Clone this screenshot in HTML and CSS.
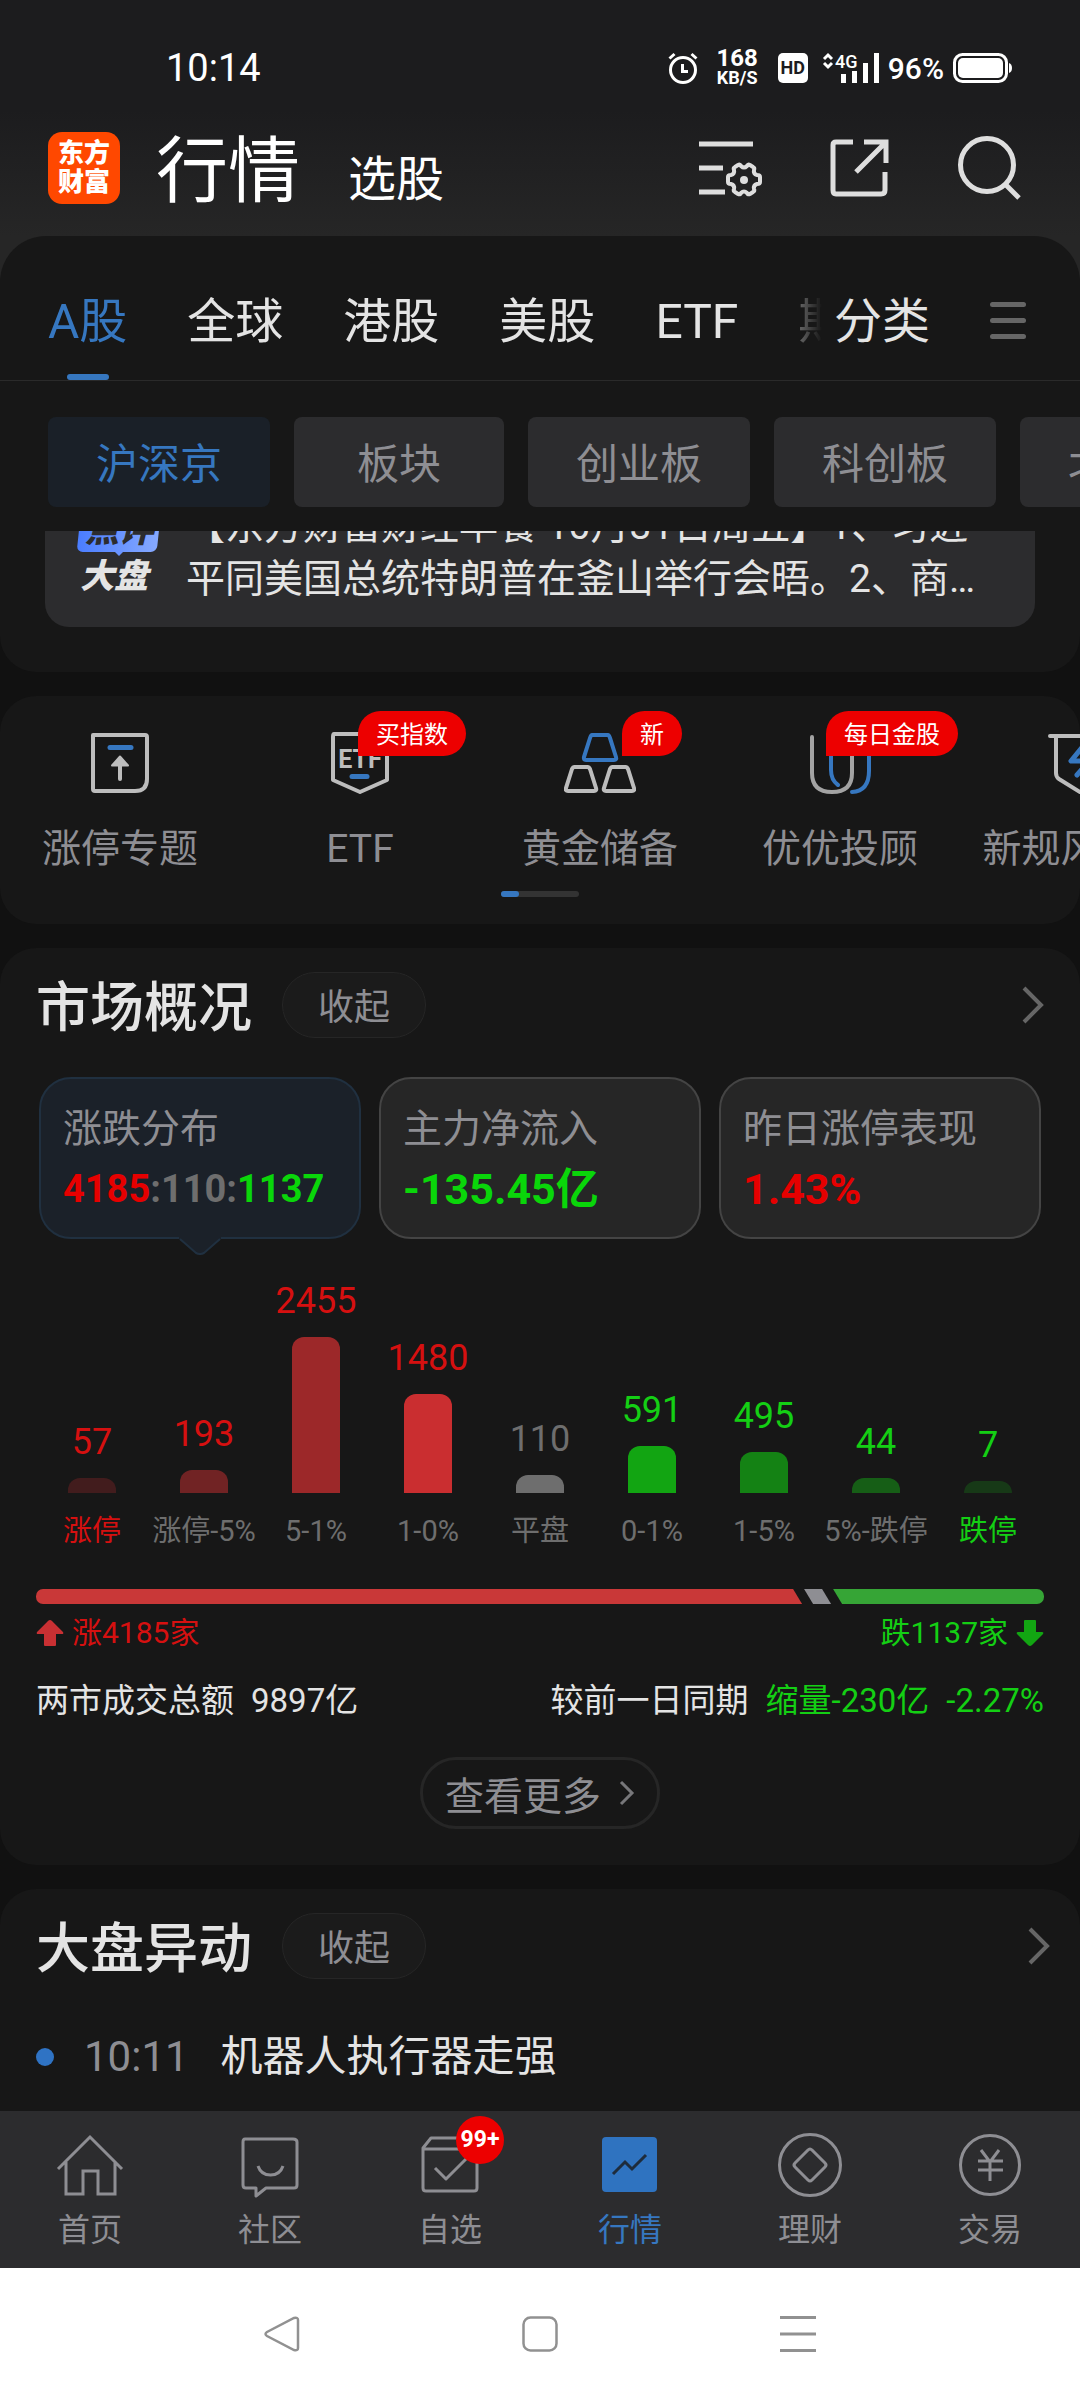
FILE: index.html
```html
<!DOCTYPE html>
<html lang="zh-CN">

<head>
    <meta charset="UTF-8">
    <meta name="viewport" content="width=device-width, initial-scale=1.0">
    <title>行情</title>
    <link rel="stylesheet" href="styles.css">
</head>

<body>
    <!-- Status Bar -->
    <div class="status-bar">
        <span class="status-time">10:14</span>
        <div class="status-icons">
            <svg class="alarm" width="30" height="32" viewBox="0 0 30 32" fill="none" stroke="#fff" stroke-width="3">
                <circle cx="15" cy="18" r="12.5" />
                <path d="M14.500 12v7.500h5.500M1.500 6.500l5-4.500M28.500 6.500l-5-4.500" />
            </svg>
            <span class="net-speed"><b>168</b><i>KB/S</i></span>
            <span class="hd">HD</span>
            <svg class="signal" width="58" height="32" viewBox="0 0 58 32">
                <path d="M2 7l4-4 4 4M2 11l4 4 4-4" fill="none" stroke="#fff" stroke-width="3" />
                <text x="13" y="16" class="signal-type">4G</text>
                <path d="M19 22h5v9h-5zM30 19h5v12h-5zM41 11h5v20h-5zM52 1h5v30h-5z" fill="#fff" />
            </svg>
            <span class="percent">96%</span>
            <svg width="60" height="32" viewBox="0 0 60 32">
                <rect x="1.500" y="2.500" width="52" height="27" rx="8" fill="none" stroke="#fff" stroke-width="3" />
                <rect x="5" y="6" width="45" height="20" rx="5" fill="#fff" />
                <path d="M56 11q3 1 3 5t-3 5z" fill="#fff" />
            </svg>
        </div>
    </div>

    <!-- Header -->
    <header class="header">
        <div class="logo"><span>东方</span><span>财富</span></div>
        <div class="header-titles">
            <h1>行情</h1>
            <a href="#">选股</a>
        </div>
        <div class="header-actions">
            <button type="button" aria-label="设置">
                <svg width="72" height="72" viewBox="0 0 72 72" fill="none" stroke="#dedede" stroke-width="5">
                    <path d="M5 12h54M5 36h24M5 60h26" />
                    <path d="M44 33q2-1 3 1 3 3 6 0 1-2 3-1l3 2q2 1 1 3-1 4 3 5 3 0 3 2v5q0 2-3 2-4 1-3 5 1 2-1 3l-3 2q-2 1-3-1-3-3-6 0-1 2-3 1l-3-2q-2-1-1-3 1-4-3-5-3 0-3-2v-5q0-2 3-2 4-1 3-5-1-2 1-3z" stroke-width="4" />
                    <circle cx="50" cy="48" r="4" fill="#dedede" stroke="none" />
                </svg>
            </button>
            <button type="button" aria-label="分享">
                <svg width="72" height="72" viewBox="0 0 72 72" fill="none" stroke="#dedede" stroke-width="5">
                    <path d="M29 10H12q-3 0-3 3v45q0 4 3 4h45q4 0 4-4V40" />
                    <path d="M40 10h22v21M61 11L32 40" />
                </svg>
            </button>
            <button type="button" aria-label="搜索">
                <svg width="72" height="72" viewBox="0 0 72 72" fill="none" stroke="#dedede" stroke-width="5">
                    <circle cx="33" cy="33" r="26.500" />
                    <path d="M51 52l14 14" />
                </svg>
            </button>
        </div>
    </header>

    <main class="main">
        <!-- Market Tabs -->
        <section class="panel panel-top">
            <div class="tabs">
                <nav class="tab-list">
                    <a href="#" class="active">A股</a>
                    <a href="#">全球</a>
                    <a href="#">港股</a>
                    <a href="#">美股</a>
                    <a href="#">ETF</a>
                    <a href="#">期货</a>
                </nav>
                <a href="#" class="tab-category">分类</a>
                <button type="button" class="tab-menu" aria-label="菜单"><i></i><i></i><i></i></button>
            </div>

            <div class="chips">
                <button type="button" class="chip active">沪深京</button>
                <button type="button" class="chip">板块</button>
                <button type="button" class="chip">创业板</button>
                <button type="button" class="chip">科创板</button>
                <button type="button" class="chip">北交所</button>
            </div>

            <div class="news-window">
                <a href="#" class="news">
                    <span class="news-logo"><b>点评</b><em>大盘</em></span>
                    <span class="news-text">【东方财富财经早餐 10月31日周五】1、习近<br>平同美国总统特朗普在釜山举行会晤。2、商…</span>
                </a>
            </div>
        </section>

        <!-- Shortcuts -->
        <section class="panel panel-shortcuts">
            <div class="shortcuts">
                <a href="#" class="shortcut">
                    <svg width="72" height="72" viewBox="0 0 72 72" fill="none" stroke="#bdbdbd" stroke-width="4" stroke-linejoin="round">
                        <path d="M9 8h52q2 0 2 2v42q0 12-12 12H11q-2 0-2-2V8z" />
                        <path d="M26 20.500h21" stroke="#3677c0" stroke-width="5" stroke-linecap="round" />
                        <path d="M36 34v18" stroke-linecap="round" />
                        <path d="M36 29.500l8 9H28z" fill="#bdbdbd" stroke-width="2" />
                    </svg>
                    <span>涨停专题</span>
                </a>
                <a href="#" class="shortcut">
                    <svg width="72" height="72" viewBox="0 0 72 72" fill="none" stroke="#bdbdbd" stroke-width="4" stroke-linejoin="round">
                        <path d="M10 7h50q3 0 3 3v43L36 65 9 53V10q0-3 1-3z" />
                        <text x="36" y="41" class="etf-mark">ETF</text>
                        <path d="M28 49.500h15" stroke="#3677c0" stroke-width="5" stroke-linecap="round" />
                    </svg>
                    <span>ETF</span>
                    <b class="tag tag-etf">买指数</b>
                </a>
                <a href="#" class="shortcut">
                    <svg width="72" height="72" viewBox="0 0 72 72" fill="none" stroke="#bdbdbd" stroke-width="4" stroke-linejoin="round">
                        <path d="M28 8h16q1 0 2 3l6 19q1 3-2 3H22q-3 0-2-3l6-19q1-3 2-3z" stroke="#3677c0" />
                        <path d="M10 40h14q1 0 2 2l6 19q1 3-2 3H4q-3 0-2-3l6-19q1-2 2-2zM48 40h14q1 0 2 2l6 19q1 3-2 3H42q-3 0-2-3l6-19q1-2 2-2z" />
                    </svg>
                    <span>黄金储备</span>
                    <b class="tag tag-gold">新</b>
                </a>
                <a href="#" class="shortcut">
                    <svg width="72" height="72" viewBox="0 0 72 72" fill="none" stroke-width="4" stroke-linecap="round">
                        <path d="M27 10v33q0 10 7 15M65 10v34q0 20-17 21" stroke="#3677c0" />
                        <path d="M8 10v36q0 19 20 19t20-19V10" stroke="#a3a3a3" />
                    </svg>
                    <span>优优投顾</span>
                    <b class="tag tag-advisor">每日金股</b>
                </a>
                <a href="#" class="shortcut">
                    <svg width="72" height="72" viewBox="0 0 72 72" fill="none" stroke="#bdbdbd" stroke-width="4" stroke-linecap="round" stroke-linejoin="round">
                        <path d="M6 9h60M12 9v37q0 4 3 6l21 13 21-13q3-2 3-6V9" />
                        <path d="M40 18L27 34h18L33 48" stroke="#3677c0" stroke-width="5" />
                    </svg>
                    <span>新规风向标</span>
                </a>
            </div>
            <div class="scroll-track"><i></i></div>
        </section>

        <!-- Market Overview -->
        <section class="panel panel-overview">
            <div class="panel-head">
                <h2>市场概况</h2>
                <button type="button" class="fold">收起</button>
                <a href="#" class="more" aria-label="更多">
                    <svg width="22" height="38" viewBox="0 0 22 38" fill="none" stroke="#666" stroke-width="4"><path d="M2 2l17 17L2 36" /></svg>
                </a>
            </div>

            <div class="cards">
                <button type="button" class="card active">
                    <span class="card-title">涨跌分布</span>
                    <span class="card-ratio"><b class="up">4185</b><b class="flat">:110:</b><b class="down">1137</b></span>
                    <svg class="card-arrow" width="42" height="18" viewBox="0 0 42 18">
                        <path d="M0 0h42v2L25 16q-4 2-8 0L0 2z" fill="#1b2129" />
                        <path d="M1 2l16 14q4 2 8 0L41 2" fill="none" stroke="#203040" stroke-width="2" />
                    </svg>
                </button>
                <button type="button" class="card">
                    <span class="card-title">主力净流入</span>
                    <b class="card-value down">-135.45亿</b>
                </button>
                <button type="button" class="card">
                    <span class="card-title">昨日涨停表现</span>
                    <b class="card-value up">1.43%</b>
                </button>
            </div>

            <div class="chart">
                <div class="col up-text"><span>57</span><i class="bar red-1" style="height: 15px"></i><small>涨停</small></div>
                <div class="col up-text mid"><span>193</span><i class="bar red-2" style="height: 23px"></i><small>涨停-5%</small></div>
                <div class="col up-text mid"><span>2455</span><i class="bar red-3" style="height: 156px"></i><small>5-1%</small></div>
                <div class="col up-text mid"><span>1480</span><i class="bar red-4" style="height: 99px"></i><small>1-0%</small></div>
                <div class="col flat-text mid"><span>110</span><i class="bar gray" style="height: 18px"></i><small>平盘</small></div>
                <div class="col down-text mid"><span>591</span><i class="bar green-4" style="height: 47px"></i><small>0-1%</small></div>
                <div class="col down-text mid"><span>495</span><i class="bar green-3" style="height: 41px"></i><small>1-5%</small></div>
                <div class="col down-text mid"><span>44</span><i class="bar green-2" style="height: 15px"></i><small>5%-跌停</small></div>
                <div class="col down-text"><span>7</span><i class="bar green-1" style="height: 12px"></i><small>跌停</small></div>
            </div>

            <div class="ratio-bar">
                <i class="ratio-up" style="width: 76%"></i>
                <i class="ratio-flat"></i>
                <i class="ratio-down"></i>
            </div>
            <div class="ratio-text">
                <span class="up-text">
                    <svg width="28" height="28" viewBox="0 0 28 28"><path d="M12 2q2-2 4 0l11 11q1 2-1 2h-6v11q0 1-1 1H9q-1 0-1-1V15H2q-2 0-1-2z" fill="#c93033" /></svg>
                    涨4185家
                </span>
                <span class="down-text">
                    跌1137家
                    <svg width="28" height="28" viewBox="0 0 28 28"><path d="M12 26q2 2 4 0l11-11q1-2-1-2h-6V2q0-1-1-1H9q-1 0-1 1v11H2q-2 0-1 2z" fill="#12a512" /></svg>
                </span>
            </div>
            <div class="turnover">
                <span>两市成交总额</span>
                <span>9897亿</span>
                <span class="turnover-diff">较前一日同期</span>
                <span class="down-text">缩量-230亿</span>
                <span class="down-text">-2.27%</span>
            </div>
            <a href="#" class="view-more">查看更多
                <svg width="16" height="26" viewBox="0 0 16 26" fill="none" stroke="#77777a" stroke-width="3"><path d="M2 2l11 11L2 24" /></svg>
            </a>
        </section>

        <!-- Market Movements -->
        <section class="panel panel-moves">
            <div class="panel-head">
                <h2>大盘异动</h2>
                <button type="button" class="fold">收起</button>
                <a href="#" class="more" aria-label="更多">
                    <svg width="22" height="38" viewBox="0 0 22 38" fill="none" stroke="#666" stroke-width="4"><path d="M2 2l17 17L2 36" /></svg>
                </a>
            </div>
            <div class="move">
                <i class="dot"></i>
                <time>10:11</time>
                <a href="#">机器人执行器走强</a>
            </div>
        </section>
    </main>

    <!-- Bottom Tab Bar -->
    <nav class="tab-bar">
        <a href="#">
            <svg width="72" height="72" viewBox="0 0 72 72" fill="none" stroke="#8e8e93" stroke-width="3">
                <path d="M4 40L36 8l32 32M12 33v32h17V42h15v23h17V33" />
            </svg>
            <span>首页</span>
        </a>
        <a href="#">
            <svg width="72" height="72" viewBox="0 0 72 72" fill="none" stroke="#8e8e93" stroke-width="3" stroke-linejoin="round">
                <path d="M11 10h48q4 0 4 3v43q0 3-3 3H32l-10 8v-8H12q-3 0-3-3V13q0-3 2-3zM24 37q3 9 12.500 9T49 37" />
            </svg>
            <span>社区</span>
        </a>
        <a href="#">
            <svg width="72" height="72" viewBox="0 0 72 72" fill="none" stroke="#8e8e93" stroke-width="3" stroke-linejoin="round">
                <path d="M9 19l8-10h38l8 10v40q0 3-3 3H12q-3 0-3-3zM9 20h54M21 39l11 11 22-22" />
            </svg>
            <span>自选</span>
            <b class="count">99+</b>
        </a>
        <a href="#" class="active">
            <svg width="72" height="72" viewBox="0 0 72 72">
                <rect x="8" y="8" width="55" height="55" rx="4" fill="#2f73c0" />
                <path d="M19 45l12-12 7 7 14-14" fill="none" stroke="#1e2c3c" stroke-width="3" />
            </svg>
            <span>行情</span>
        </a>
        <a href="#">
            <svg width="72" height="72" viewBox="0 0 72 72" fill="none" stroke="#8e8e93" stroke-width="3" stroke-linejoin="round">
                <circle cx="36" cy="36" r="30.500" />
                <path d="M34 21q2-2 4 0l13 13q2 2 0 4L38 51q-2 2-4 0L21 38q-2-2 0-4z" />
            </svg>
            <span>理财</span>
        </a>
        <a href="#">
            <svg width="72" height="72" viewBox="0 0 72 72" fill="none" stroke="#8e8e93" stroke-width="3">
                <circle cx="36" cy="36" r="29.500" />
                <path d="M27 21l9 12 9-12M24 32h25M24 41h25M36 32v20" />
            </svg>
            <span>交易</span>
        </a>
    </nav>

    <!-- System Navigation -->
    <div class="system-nav">
        <button type="button" aria-label="返回">
            <svg width="36" height="36" viewBox="0 0 36 36" fill="none" stroke="#919191" stroke-width="2.500"><path d="M3 16Q0 18 3 20L30 34q4 1 4-2V4q0-3-4-2z" /></svg>
        </button>
        <button type="button" aria-label="主屏幕">
            <svg width="36" height="36" viewBox="0 0 36 36" fill="none" stroke="#919191" stroke-width="2.500"><rect x="1.500" y="1.500" width="33" height="33" rx="7" /></svg>
        </button>
        <button type="button" aria-label="最近任务">
            <svg width="36" height="36" viewBox="0 0 36 36" fill="none" stroke="#919191" stroke-width="3"><path d="M0 1.500h36M0 18h36M0 34.500h36" /></svg>
        </button>
    </div>
</body>

</html>
```

FILE: styles.css
```css
* {
    box-sizing: border-box;
}

body {
    margin: 0;
    min-height: 100vh;
    display: flex;
    flex-direction: column;
    font-family: Roboto, "Noto Sans CJK SC", sans-serif;
    color: #e4e4e4;
    background: #111 linear-gradient(#1c1c1e 110px, #262626 236px) no-repeat;
    background-size: 100% 300px;
    overflow-x: hidden;
}

a {
    color: inherit;
    text-decoration: none;
}

button {
    font-family: inherit;
    color: inherit;
    background: none;
    border: 0;
    padding: 0;
    margin: 0;
}

svg {
    display: block;
    flex-shrink: 0;
}

i,
em {
    font-style: normal;
}

h1,
h2 {
    margin: 0;
}

/* Status Bar */
.status-bar {
    height: 104px;
    padding: 32px 67px 0 166px;
    display: flex;
    align-items: center;
    justify-content: space-between;
    color: #fff;
}

.status-time {
    font-size: 38px;
}

.status-icons {
    display: flex;
    align-items: center;
}

.net-speed {
    display: flex;
    flex-direction: column;
    align-items: center;
    margin: 0 20px 0 18px;
    line-height: 20px;
}

.net-speed b {
    font-size: 24px;
    font-weight: 700;
}

.net-speed i {
    font-size: 18px;
    font-weight: 700;
}

.hd {
    width: 30px;
    height: 30px;
    margin-right: 14px;
    border-radius: 5px;
    background: #fff;
    color: #1c1c1e;
    font-size: 18px;
    font-weight: 700;
    line-height: 30px;
    text-align: center;
}

.signal-type {
    font-size: 18px;
    font-weight: 500;
    fill: #fff;
}

.percent {
    margin: 0 9px 0 8px;
    font-size: 30px;
    font-weight: 500;
}

/* Header */
.header {
    height: 132px;
    padding: 0 54px 4px 48px;
    display: flex;
    align-items: center;
}

.logo {
    width: 72px;
    height: 72px;
    display: flex;
    flex-direction: column;
    justify-content: center;
    align-items: center;
    border-radius: 14px;
    background: #ff4800;
    color: #fff;
    font-size: 26px;
    font-weight: 900;
    line-height: 29px;
}

.header-titles {
    display: flex;
    align-items: baseline;
    gap: 48px;
    margin-left: 36px;
    padding-top: 8px;
    color: #fff;
    font-size: 48px;
}

.header-titles h1 {
    font-size: 72px;
    font-weight: 400;
    line-height: 80px;
}

.header-actions {
    display: flex;
    gap: 58px;
    margin-left: auto;
}

.main {
    flex: 1;
    display: flex;
    flex-direction: column;
    gap: 24px;
}

.panel {
    border-radius: 36px;
    background: #171717;
    overflow: hidden;
}

/* Market Tabs */
.panel-top {
    padding-bottom: 45px;
    border-radius: 46px 46px 36px 36px;
}

.tabs {
    display: flex;
    padding-right: 54px;
    border-bottom: 1px solid #2a2a2a;
    font-size: 48px;
    line-height: 60px;
}

.tabs a {
    flex-shrink: 0;
    padding: 56px 0 28px;
}

.tab-list {
    flex: 1;
    min-width: 0;
    display: flex;
    gap: 60px;
    padding-left: 48px;
    overflow: hidden;
    -webkit-mask-image: linear-gradient(to left, transparent, #000 60px);
    mask-image: linear-gradient(to left, transparent, #000 60px);
}

.tab-list .active {
    position: relative;
    color: #3677c0;
}

.tab-list .active::after {
    content: "";
    position: absolute;
    left: 50%;
    bottom: 0;
    width: 42px;
    height: 6px;
    margin-left: -21px;
    border-radius: 3px;
    background: #3677c0;
}

.tabs .tab-category {
    margin: 0 60px 0 12px;
}

.tab-menu {
    width: 36px;
    padding-top: 24px;
    display: flex;
    flex-direction: column;
    justify-content: center;
    gap: 11px;
}

.tab-menu i {
    width: 36px;
    height: 5px;
    border-radius: 3px;
    background: #666;
}

.chips {
    display: flex;
    gap: 24px;
    padding: 36px 0 24px 48px;
}

.chip {
    flex-shrink: 0;
    height: 90px;
    min-width: 210px;
    padding: 0 48px 3px;
    border-radius: 8px;
    background: #2c2c2e;
    color: #8e8e93;
    font-size: 42px;
}

.chip.active {
    background: #1a2028;
    color: #3677c0;
}

/* The news card is scrolled partly under the chips */
.news-window {
    height: 96px;
    margin: 0 45px;
    display: flex;
    align-items: flex-end;
    overflow: hidden;
}

.news {
    flex: 1;
    display: flex;
    align-items: flex-end;
    padding: 24px 0 21px 28px;
    border-radius: 24px;
    background: #2c2c2e;
}

.news-logo {
    width: 92px;
    margin-right: 21px;
    display: flex;
    flex-direction: column;
    align-items: center;
    font-size: 34px;
    font-weight: 900;
    font-style: italic;
}

.news-logo b {
    position: relative;
    z-index: 0;
    width: 80px;
    font-weight: 900;
    line-height: 44px;
    text-align: center;
    color: #2c2c2e;
}

.news-logo b::before {
    content: "";
    position: absolute;
    z-index: -1;
    inset: 0;
    border-radius: 6px;
    background: linear-gradient(to right, #4a7dff, #86a9ff);
    transform: skewX(-6deg);
}

.news-logo b::after {
    content: "";
    position: absolute;
    left: 50%;
    bottom: -4px;
    margin-left: -5px;
    border: 5px solid transparent;
    border-top-color: #6a94ff;
    border-bottom: 0;
}

.news-logo em {
    padding: 0 10px 6px 0;
    font-style: italic;
    line-height: 48px;
}

.news-text {
    font-size: 39px;
    line-height: 53px;
    white-space: nowrap;
}

/* Shortcuts */
.panel-shortcuts {
    padding: 31px 0 27px;
}

.shortcuts {
    display: flex;
}

.shortcut {
    position: relative;
    flex: 0 0 240px;
    display: flex;
    flex-direction: column;
    align-items: center;
    gap: 20px;
    color: #8e8e93;
    font-size: 39px;
    line-height: 60px;
}

.etf-mark {
    font-size: 25px;
    font-weight: 700;
    text-anchor: middle;
    fill: #bdbdbd;
    stroke: none;
}

.tag {
    position: absolute;
    top: -16px;
    height: 45px;
    padding: 2px 18px 0;
    border-radius: 23px 23px 23px 0;
    background: #ed0000;
    color: #fff;
    font-size: 24px;
    font-weight: 400;
    line-height: 44px;
}

.tag-etf {
    left: 118px;
}

.tag-gold {
    left: 142px;
}

.tag-advisor {
    left: 106px;
}

.scroll-track {
    width: 78px;
    height: 6px;
    margin: 12px auto 0;
    border-radius: 3px;
    background: #333;
}

.scroll-track i {
    display: block;
    width: 18px;
    height: 6px;
    border-radius: 3px;
    background: #3677c0;
}

/* Panel Heads */
.panel-overview,
.panel-moves {
    padding: 24px 36px 36px;
}

.panel-head {
    display: flex;
    align-items: center;
    height: 66px;
}

.panel-head h2 {
    padding-top: 8px;
    font-size: 54px;
    font-weight: 500;
    line-height: 66px;
}

.fold {
    width: 144px;
    height: 66px;
    margin-left: 30px;
    padding-bottom: 2px;
    border: 1px solid #262626;
    border-radius: 33px;
    background: #1b1b1b;
    color: #8e8e93;
    font-size: 36px;
}

.more {
    margin-left: auto;
}

/* Overview Cards */
.cards {
    display: flex;
    gap: 18px;
    margin: 39px 3px 0;
}

.card {
    position: relative;
    flex: 1;
    height: 162px;
    padding: 2px 0 0 22px;
    display: flex;
    flex-direction: column;
    justify-content: center;
    border: 2px solid #444;
    border-radius: 32px;
    background: #262626;
    text-align: left;
}

.card.active {
    border-color: #203040;
    background: #1b2129;
}

.card-title {
    color: #8e8e93;
    font-size: 39px;
    line-height: 60px;
}

.card-ratio {
    font-size: 38px;
    line-height: 60px;
}

.card-value {
    font-size: 43px;
    line-height: 60px;
}

.card-arrow {
    position: absolute;
    left: 50%;
    bottom: -18px;
    margin-left: -21px;
}

.up {
    color: #e60000;
}

.flat {
    color: #6e6e6e;
}

.down {
    color: #0ad60a;
}

/* Distribution Chart */
.chart {
    display: flex;
    align-items: flex-end;
    margin-top: 42px;
}

.col {
    flex: 1;
    min-width: 0;
    display: flex;
    flex-direction: column;
    align-items: center;
}

.col span {
    margin-bottom: 16px;
    font-size: 36px;
    line-height: 40px;
}

.col small {
    margin-top: 18px;
    font-size: 29px;
    line-height: 40px;
    white-space: nowrap;
}

.col.mid small {
    color: #6e6e6e;
}

.up-text {
    color: #d61010;
}

.flat-text {
    color: #6e6e6e;
}

.down-text {
    color: #14cf14;
}

.bar {
    width: 48px;
    border-radius: 12px 12px 0 0;
}

.red-1 {
    background: #421c1d;
}

.red-2 {
    background: #712324;
}

.red-3 {
    background: #9c2829;
}

.red-4 {
    background: #ca2e30;
}

.gray {
    background: #6e6e6e;
}

.green-4 {
    background: #12a512;
}

.green-3 {
    background: #148214;
}

.green-2 {
    background: #165e16;
}

.green-1 {
    background: #173917;
}

/* Up / Down Ratio */
.ratio-bar {
    display: flex;
    gap: 2px;
    height: 15px;
    margin-top: 38px;
    border-radius: 7px;
    overflow: hidden;
}

.ratio-up {
    background: #c93838;
    clip-path: polygon(0 0, calc(100% - 9px) 0, 100% 100%, 0 100%);
}

.ratio-flat {
    width: 27px;
    background: #8e8e93;
    clip-path: polygon(0 0, 18px 0, 100% 100%, 9px 100%);
}

.ratio-down {
    flex: 1;
    background: #36a536;
    clip-path: polygon(0 0, 100% 0, 100% 100%, 9px 100%);
}

.ratio-text {
    display: flex;
    justify-content: space-between;
    margin-top: 9px;
    font-size: 30px;
    line-height: 40px;
}

.ratio-text span {
    display: flex;
    align-items: center;
    gap: 8px;
}

.turnover {
    display: flex;
    gap: 17px;
    margin-top: 28px;
    font-size: 33px;
    line-height: 40px;
}

.turnover-diff {
    margin-left: auto;
}

.view-more {
    width: 240px;
    height: 72px;
    margin: 36px auto 0;
    display: flex;
    align-items: center;
    justify-content: center;
    gap: 18px;
    border: 3px solid #262626;
    border-radius: 36px;
    color: #8e8e93;
    font-size: 39px;
}

/* Market Movements */
.panel-moves {
    flex: 1;
    padding: 24px 30px 20px 36px;
    border-radius: 36px 36px 0 0;
}

.move {
    display: flex;
    align-items: center;
    margin-top: 48px;
    font-size: 42px;
    line-height: 60px;
}

.dot {
    width: 18px;
    height: 18px;
    border-radius: 50%;
    background: #2f73c4;
}

.move time {
    margin: 0 32px 0 30px;
    color: #8e8e93;
}

/* Bottom Tab Bar */
.tab-bar {
    display: flex;
    height: 157px;
    padding-top: 18px;
    background: #2c2c2e;
    color: #8e8e93;
}

.tab-bar a {
    position: relative;
    flex: 1;
    display: flex;
    flex-direction: column;
    align-items: center;
    gap: 6px;
    font-size: 32px;
    line-height: 46px;
}

.tab-bar .active {
    color: #3677c0;
}

.count {
    position: absolute;
    left: 50%;
    top: -13px;
    width: 48px;
    height: 48px;
    margin-left: 6px;
    border-radius: 50%;
    background: #ed0000;
    color: #fff;
    font-size: 23px;
    line-height: 48px;
    text-align: center;
}

/* System Navigation */
.system-nav {
    display: flex;
    align-items: center;
    justify-content: center;
    gap: 222px;
    height: 132px;
    background: #fff;
}
```
